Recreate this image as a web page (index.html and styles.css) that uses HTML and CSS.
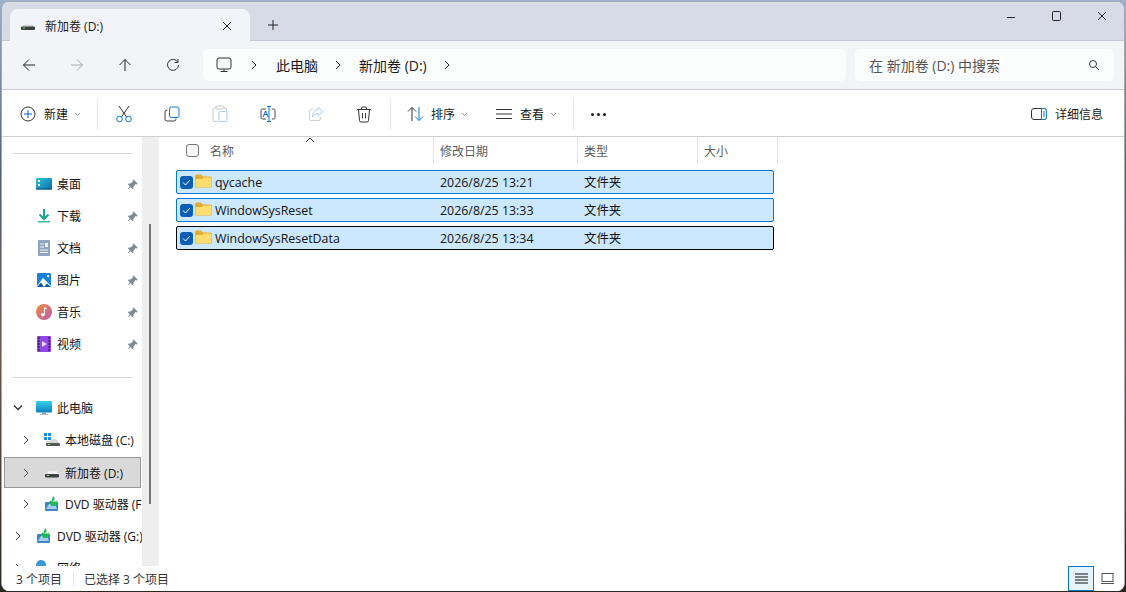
FILE: index.html
```html
<!DOCTYPE html>
<html lang="zh-CN">
    <head>
        <title>新加卷 (D:) - 文件资源管理器</title>
        <meta charset="UTF-8">
        <meta name="viewport" content="width=device-width, initial-scale=1">
        <link rel="stylesheet" href="styles.css">
    </head>

    <body>
        <div class="window">
            <!-- title bar -->
            <div class="titlebar">
                <div class="tab">
                    <svg class="tab-icon" width="16" height="16" viewBox="0 0 16 16"><path d="M2 9.5 3.5 6.5H12.5L14 9.5Z" fill="#d5d7da"/><rect x="1" y="8.5" width="14" height="3.5" rx="1" fill="#3c3f41"/><rect x="3" y="9.5" width="2" height="1" fill="#6fe05a"/></svg>
                    <span class="tab-title">新加卷 (D:)</span>
                    <svg class="tab-close" width="10" height="10" viewBox="0 0 10 10"><path d="M1 1 9 9M9 1 1 9" stroke="#222" fill="none"/></svg>
                </div>
                <svg class="tab-add" width="12" height="12" viewBox="0 0 12 12"><path d="M6 1V11M1 6H11" stroke="#222" fill="none"/></svg>
                <div class="win-controls">
                    <svg class="win-btn" width="10" height="10" viewBox="0 0 10 10"><path d="M1 6.5H9" stroke="#222" fill="none"/></svg>
                    <svg class="win-btn" width="10" height="10" viewBox="0 0 10 10"><rect x="1.5" y="0.5" width="8" height="9" rx="1" stroke="#222" fill="none"/></svg>
                    <svg class="win-btn" width="10" height="10" viewBox="0 0 10 10"><path d="M1 1 9 9M9 1 1 9" stroke="#222" fill="none"/></svg>
                </div>
            </div>

            <!-- back / forward / address -->
            <div class="navbar">
                <div class="nav-btns">
                    <svg class="nav-btn" width="14" height="14" viewBox="0 0 14 14"><path d="M13 7H1.5M7 1.5 1.5 7 7 12.5" stroke="#222" fill="none"/></svg>
                    <svg class="nav-btn" width="14" height="14" viewBox="0 0 14 14"><path d="M1 7H12.5M7 1.5 12.5 7 7 12.5" stroke="#a9abae" fill="none"/></svg>
                    <svg class="nav-btn" width="14" height="14" viewBox="0 0 14 14"><path d="M7 13V1.5M1.5 7 7 1.5 12.5 7" stroke="#222" fill="none"/></svg>
                    <svg class="nav-btn" width="14" height="14" viewBox="0 0 14 14"><path d="M11.8 4.2A5.5 5.5 0 1 0 12.5 7M12 1V4.5H8.5" stroke="#333" fill="none"/></svg>
                </div>
                <div class="address">
                    <svg class="pc-icon" width="16" height="16" viewBox="0 0 16 16"><rect x="1" y="1" width="14" height="11" rx="2" stroke="#333" fill="none"/><path d="M8 12V14.5M4.5 14.5H11.5" stroke="#333" fill="none"/></svg>
                    <svg class="crumb-sep" width="6" height="10" viewBox="0 0 6 10"><path d="M1 1 5 5 1 9" stroke="#222" fill="none"/></svg>
                    <span class="crumb">此电脑</span>
                    <svg class="crumb-sep" width="6" height="10" viewBox="0 0 6 10"><path d="M1 1 5 5 1 9" stroke="#222" fill="none"/></svg>
                    <span class="crumb">新加卷 (D:)</span>
                    <svg class="crumb-sep" width="6" height="10" viewBox="0 0 6 10"><path d="M1 1 5 5 1 9" stroke="#222" fill="none"/></svg>
                </div>
                <div class="search">
                    <span class="search-text">在 新加卷 (D:) 中搜索</span>
                    <svg width="12" height="12" viewBox="0 0 12 12"><circle cx="5" cy="5" r="3.5" stroke="#333" fill="none"/><path d="M7.5 7.5 11 11" stroke="#333" fill="none"/></svg>
                </div>
            </div>

            <!-- command bar -->
            <div class="toolbar">
                <div class="tool-new">
                    <svg width="16" height="16" viewBox="0 0 16 16"><circle cx="8" cy="8" r="7" stroke="#333" fill="none"/><path d="M8 4V12M4 8H12" stroke="#0a63b8" fill="none"/></svg>
                    <span class="tool-label">新建</span>
                    <svg class="caret" width="7" height="5" viewBox="0 0 7 5"><path d="M1 1 3.5 3.5 6 1" stroke="#999" fill="none"/></svg>
                </div>
                <div class="tool-sep"></div>
                <div class="tool-icons">
                    <div class="tool">
                        <svg width="16" height="18" viewBox="0 0 16 18"><path d="M3 1 10.5 12M13 1 5.5 12" stroke="#333" fill="none"/><circle cx="3.5" cy="14" r="2.8" stroke="#0a78d4" fill="none"/><circle cx="12.5" cy="14" r="2.8" stroke="#0a78d4" fill="none"/></svg>
                    </div>
                    <div class="tool">
                        <svg width="16" height="16" viewBox="0 0 16 16"><path d="M3.5 4H3A2 2 0 0 0 1 6V13A2 2 0 0 0 3 15H10A2 2 0 0 0 12 13V12.5" stroke="#444" fill="none"/><rect x="5.5" y="1" width="9.5" height="10.5" rx="2" stroke="#0a78d4" fill="none"/></svg>
                    </div>
                    <div class="tool">
                        <svg width="16" height="18" viewBox="0 0 16 18"><path d="M4 3H2.5A1.5 1.5 0 0 0 1 4.5V15A1.5 1.5 0 0 0 2.5 16.5H6M12 3H13.5A1 1 0 0 1 14.5 4.5V6" stroke="#c8c8c8" fill="none"/><rect x="4" y="1" width="8" height="3" rx="1" stroke="#c8c8c8" fill="none"/><rect x="7" y="6.5" width="8" height="10" rx="1.5" stroke="#a8cdec" fill="none"/></svg>
                    </div>
                    <div class="tool">
                        <svg width="16" height="16" viewBox="0 0 16 16"><path d="M6 3H2.5A1.5 1.5 0 0 0 1 4.5V11.5A1.5 1.5 0 0 0 2.5 13H6M12 3H13.5A1.5 1.5 0 0 1 15 4.5V11.5A1.5 1.5 0 0 1 13.5 13H12" stroke="#444" fill="none"/><path d="M9 0.5V15.5M7 0.5H11M7 15.5H11" stroke="#0a78d4" fill="none"/><text x="2.6" y="11" class="rename-a">A</text></svg>
                    </div>
                    <div class="tool">
                        <svg width="16" height="16" viewBox="0 0 16 16"><path d="M5 3.5H3A1.5 1.5 0 0 0 1.5 5V13A1.5 1.5 0 0 0 3 14.5H11A1.5 1.5 0 0 0 12.5 13V11" stroke="#d0d0d0" fill="none"/><path d="M10 1.5 15 5.5 10 9.5V7.5C7.5 7.5 5.5 8.5 4.5 11 4.5 7.5 6.5 4 10 3.7Z" stroke="#a8cdec" fill="none"/></svg>
                    </div>
                    <div class="tool">
                        <svg width="16" height="17" viewBox="0 0 16 17"><path d="M1 3.5H15M5.5 3.5V2A1 1 0 0 1 6.5 1H9.5A1 1 0 0 1 10.5 2V3.5M2.5 3.5 3.5 14.5A1.5 1.5 0 0 0 5 16H11A1.5 1.5 0 0 0 12.5 14.5L13.5 3.5M6.5 7V12.5M9.5 7V12.5" stroke="#333" fill="none"/></svg>
                    </div>
                </div>
                <div class="tool-sep"></div>
                <div class="tool-menu tool-sort">
                    <svg width="17" height="16" viewBox="0 0 17 16"><path d="M5 15V1.5M1 5.5 5 1.5 9 5.5" stroke="#333" fill="none"/><path d="M12 1V14.5M8 10.5 12 14.5 16 10.5" stroke="#0a78d4" fill="none"/></svg>
                    <span class="tool-label">排序</span>
                    <svg class="caret" width="7" height="5" viewBox="0 0 7 5"><path d="M1 1 3.5 3.5 6 1" stroke="#999" fill="none"/></svg>
                </div>
                <div class="tool-menu tool-view">
                    <svg width="16" height="12" viewBox="0 0 16 12"><path d="M0 1.5H16M0 6H16M0 10.5H16" stroke="#333" fill="none"/></svg>
                    <span class="tool-label">查看</span>
                    <svg class="caret" width="7" height="5" viewBox="0 0 7 5"><path d="M1 1 3.5 3.5 6 1" stroke="#999" fill="none"/></svg>
                </div>
                <div class="tool-sep"></div>
                <div class="tool-more">
                    <span class="dot"></span><span class="dot"></span><span class="dot"></span>
                </div>
                <div class="tool-details">
                    <svg width="16" height="12" viewBox="0 0 16 12"><rect x="0.5" y="0.5" width="15" height="11" rx="2.5" stroke="#333" fill="none"/><path d="M10.5 0.5H13A2.5 2.5 0 0 1 15.5 3V9A2.5 2.5 0 0 1 13 11.5H10.5Z" stroke="#0a78d4" fill="#fff"/><path d="M12 4H14M12 6H14M12 8H14" stroke="#0a78d4" fill="none"/></svg>
                    <span class="tool-label">详细信息</span>
                </div>
            </div>

            <div class="main">
                <!-- navigation pane -->
                <div class="sidebar">
                    <div class="side-sep side-sep-top"></div>

                    <div class="side-item side-pinned">
                        <svg class="side-icon" width="16" height="16" viewBox="0 0 16 16"><defs><linearGradient id="g-desk" x1="0" y1="0" x2="1" y2="1"><stop offset="0" stop-color="#2fc4dc"/><stop offset="1" stop-color="#0a6fa8"/></linearGradient></defs><rect x="0" y="2" width="16" height="11.5" rx="1" fill="url(#g-desk)"/><rect x="2" y="4" width="2" height="2" fill="#e8f8fc"/><rect x="2" y="8" width="2" height="2" fill="#e8f8fc"/><rect x="0" y="12.5" width="16" height="1" fill="#0c4f78"/></svg>
                        <span class="side-text">桌面</span>
                        <svg class="pin" width="11" height="11" viewBox="0 0 11 11"><path d="M6.5 0.5 10.5 4.5 9.5 5.5 8.5 5 6.5 7.5V9.5L5.5 10 1 5.5 1.5 4.5H3.5L6 2.5 5.5 1.5Z M2.5 7.5 0.5 10.5 3.5 8.5Z" fill="#7d8790"/></svg>
                    </div>
                    <div class="side-item side-pinned">
                        <svg class="side-icon" width="16" height="16" viewBox="0 0 16 16"><path d="M8 1V10M3.5 6.5 8 11 12.5 6.5" stroke="#16a88c" stroke-width="2" fill="none"/><rect x="2" y="13" width="12" height="1.5" fill="#2bc4a8"/></svg>
                        <span class="side-text">下载</span>
                        <svg class="pin" width="11" height="11" viewBox="0 0 11 11"><path d="M6.5 0.5 10.5 4.5 9.5 5.5 8.5 5 6.5 7.5V9.5L5.5 10 1 5.5 1.5 4.5H3.5L6 2.5 5.5 1.5Z M2.5 7.5 0.5 10.5 3.5 8.5Z" fill="#7d8790"/></svg>
                    </div>
                    <div class="side-item side-pinned">
                        <svg class="side-icon" width="16" height="16" viewBox="0 0 16 16"><rect x="2" y="0" width="12" height="16" rx="1" fill="#8ea4c0"/><path d="M4 4H8M4 7H8M4 10H12M4 12.5H12" stroke="#eef2f7" fill="none"/><rect x="9" y="3" width="3" height="4" fill="#eef2f7"/></svg>
                        <span class="side-text">文档</span>
                        <svg class="pin" width="11" height="11" viewBox="0 0 11 11"><path d="M6.5 0.5 10.5 4.5 9.5 5.5 8.5 5 6.5 7.5V9.5L5.5 10 1 5.5 1.5 4.5H3.5L6 2.5 5.5 1.5Z M2.5 7.5 0.5 10.5 3.5 8.5Z" fill="#7d8790"/></svg>
                    </div>
                    <div class="side-item side-pinned">
                        <svg class="side-icon" width="16" height="16" viewBox="0 0 16 16"><rect x="1" y="1" width="14" height="14" rx="1" fill="#1a82d8"/><path d="M1 14 7 6 15 14V15H1Z" fill="#fff"/><path d="M1 15 5 10.5 8 15Z" fill="#0b5cad"/><path d="M8 15 11 11.5 15 15Z" fill="#0b5cad"/><rect x="11" y="3" width="2" height="2" fill="#fff"/></svg>
                        <span class="side-text">图片</span>
                        <svg class="pin" width="11" height="11" viewBox="0 0 11 11"><path d="M6.5 0.5 10.5 4.5 9.5 5.5 8.5 5 6.5 7.5V9.5L5.5 10 1 5.5 1.5 4.5H3.5L6 2.5 5.5 1.5Z M2.5 7.5 0.5 10.5 3.5 8.5Z" fill="#7d8790"/></svg>
                    </div>
                    <div class="side-item side-pinned">
                        <svg class="side-icon" width="16" height="16" viewBox="0 0 16 16"><defs><linearGradient id="g-music" x1="0" y1="0" x2="1" y2="1"><stop offset="0" stop-color="#f08a3c"/><stop offset="1" stop-color="#b85cb0"/></linearGradient></defs><circle cx="8" cy="8" r="8" fill="url(#g-music)"/><path d="M8.5 3.5V10.5" stroke="#fff" stroke-width="1.2" fill="none"/><path d="M8.5 3.5 11 5" stroke="#fff" fill="none"/><circle cx="6.8" cy="10.8" r="1.8" fill="#fff"/></svg>
                        <span class="side-text">音乐</span>
                        <svg class="pin" width="11" height="11" viewBox="0 0 11 11"><path d="M6.5 0.5 10.5 4.5 9.5 5.5 8.5 5 6.5 7.5V9.5L5.5 10 1 5.5 1.5 4.5H3.5L6 2.5 5.5 1.5Z M2.5 7.5 0.5 10.5 3.5 8.5Z" fill="#7d8790"/></svg>
                    </div>
                    <div class="side-item side-pinned">
                        <svg class="side-icon" width="16" height="16" viewBox="0 0 16 16"><rect x="1" y="0" width="14" height="16" rx="1" fill="#8f47e0"/><path d="M2 2H3.5M2 5H3.5M2 8H3.5M2 11H3.5M2 14H3.5M12.5 2H14M12.5 5H14M12.5 8H14M12.5 11H14M12.5 14H14" stroke="#1d1140" stroke-width="1.4" fill="none"/><path d="M6 5 11 8 6 11Z" fill="#e4d4fb"/></svg>
                        <span class="side-text">视频</span>
                        <svg class="pin" width="11" height="11" viewBox="0 0 11 11"><path d="M6.5 0.5 10.5 4.5 9.5 5.5 8.5 5 6.5 7.5V9.5L5.5 10 1 5.5 1.5 4.5H3.5L6 2.5 5.5 1.5Z M2.5 7.5 0.5 10.5 3.5 8.5Z" fill="#7d8790"/></svg>
                    </div>

                    <div class="side-sep"></div>

                    <div class="side-item side-top">
                        <svg class="chev" width="16" height="8" viewBox="0 0 16 8"><path d="M4 1.5 8 5.5 12 1.5" stroke="#333" stroke-width="1.3" fill="none"/></svg>
                        <svg class="side-icon" width="16" height="16" viewBox="0 0 16 16"><defs><linearGradient id="g-pc" x1="0" y1="0" x2="0" y2="1"><stop offset="0" stop-color="#38d0e8"/><stop offset="1" stop-color="#0a80c0"/></linearGradient></defs><rect x="0" y="1" width="16" height="11.5" rx="1" fill="url(#g-pc)"/><rect x="6" y="12.5" width="4" height="2" fill="#8aa0ac"/><rect x="4" y="14" width="8" height="1" fill="#a8b6be"/></svg>
                        <span class="side-text">此电脑</span>
                    </div>
                    <div class="side-item side-child">
                        <svg class="chev" width="16" height="10" viewBox="0 0 16 10"><path d="M6 1 10 5 6 9" stroke="#444" fill="none"/></svg>
                        <svg class="side-icon" width="16" height="16" viewBox="0 0 16 16"><path d="M0 1H3V4H0ZM4 1H7V4H4ZM0 5H3V8H0ZM4 5H7V8H4Z" fill="#1a8ae0"/><path d="M3 9 6 9 8 7H12.5L15 11H2Z" fill="#d5d7da"/><rect x="2" y="11" width="14" height="3" rx="1" fill="#55585b"/><rect x="4" y="12" width="2" height="1" fill="#6fe05a"/></svg>
                        <span class="side-text">本地磁盘 (C:)</span>
                    </div>
                    <div class="side-item side-child side-current">
                        <svg class="chev" width="16" height="10" viewBox="0 0 16 10"><path d="M6 1 10 5 6 9" stroke="#555" fill="none"/></svg>
                        <svg class="side-icon" width="16" height="16" viewBox="0 0 16 16"><path d="M3 9 4.5 6H12.5L15 9.5Z" fill="#f0f0f0"/><rect x="1" y="9" width="14" height="3.5" rx="1" fill="#3f4244"/><rect x="3" y="10" width="2" height="1" fill="#6fe05a"/></svg>
                        <span class="side-text">新加卷 (D:)</span>
                    </div>
                    <div class="side-item side-child">
                        <svg class="chev" width="16" height="10" viewBox="0 0 16 10"><path d="M6 1 10 5 6 9" stroke="#444" fill="none"/></svg>
                        <svg class="side-icon" width="16" height="16" viewBox="0 0 16 16"><use href="#dvd-shape"/></svg>
                        <span class="side-text">DVD 驱动器 (F:)</span>
                    </div>
                    <div class="side-item side-top">
                        <svg class="chev" width="16" height="10" viewBox="0 0 16 10"><path d="M6 1 10 5 6 9" stroke="#444" fill="none"/></svg>
                        <svg class="side-icon" width="16" height="16" viewBox="0 0 16 16"><g id="dvd-shape"><rect x="1" y="6" width="13" height="9" rx="1" fill="#3c86c8"/><path d="M2 13 5 8H11L13 13Z" fill="#a9cdea"/><path d="M9 0 11 3 8.5 5.5H12V4.5L14 7 11 10 7.5 10 4.5 6.5 6.5 4.5 7.5 5.5Z" fill="#22b85a"/></g></svg>
                        <span class="side-text">DVD 驱动器 (G:)</span>
                    </div>
                    <div class="side-item side-top">
                        <svg class="chev" width="16" height="10" viewBox="0 0 16 10"><path d="M6 1 10 5 6 9" stroke="#444" fill="none"/></svg>
                        <svg class="side-icon" width="16" height="16" viewBox="0 0 16 16"><circle cx="5" cy="5" r="5" fill="#3a9ad8"/><rect x="3" y="6" width="13" height="9" rx="1" fill="#2a7fb8"/></svg>
                        <span class="side-text">网络</span>
                    </div>
                </div>

                <div class="scrollbar">
                    <div class="scroll-thumb"></div>
                </div>

                <!-- file list -->
                <div class="content">
                    <svg class="sort-mark" width="10" height="6" viewBox="0 0 10 6"><path d="M1 5 5 1 9 5" stroke="#333" fill="none"/></svg>
                    <div class="list-head">
                        <div class="col col-name">
                            <span class="head-check"></span>
                            <span>名称</span>
                        </div>
                        <div class="col col-date">修改日期</div>
                        <div class="col col-type">类型</div>
                        <div class="col col-size">大小</div>
                    </div>

                    <div class="file-row">
                        <div class="file-name">
                            <span class="file-check"><svg width="9" height="7" viewBox="0 0 9 7"><path d="M1 3.5 3.5 6 8 1" stroke="#fff" fill="none"/></svg></span>
                            <svg class="folder" width="17" height="14" viewBox="0 0 17 14"><path d="M0 2A1.5 1.5 0 0 1 1.5 0.5H6L8 2.5H15.5A1.5 1.5 0 0 1 17 4V12A1.5 1.5 0 0 1 15.5 13.5H1.5A1.5 1.5 0 0 1 0 12Z" fill="#e9ab2c"/><path d="M0.5 5 7 5 8.5 3.5H15.5A1 1 0 0 1 16.5 4.5V12A1 1 0 0 1 15.5 13H1.5A1 1 0 0 1 0.5 12Z" fill="#ffdc6e"/></svg>
                            <span>qycache</span>
                        </div>
                        <div class="file-date">2026/8/25 13:21</div>
                        <div class="file-type">文件夹</div>
                    </div>
                    <div class="file-row">
                        <div class="file-name">
                            <span class="file-check"><svg width="9" height="7" viewBox="0 0 9 7"><path d="M1 3.5 3.5 6 8 1" stroke="#fff" fill="none"/></svg></span>
                            <svg class="folder" width="17" height="14" viewBox="0 0 17 14"><path d="M0 2A1.5 1.5 0 0 1 1.5 0.5H6L8 2.5H15.5A1.5 1.5 0 0 1 17 4V12A1.5 1.5 0 0 1 15.5 13.5H1.5A1.5 1.5 0 0 1 0 12Z" fill="#e9ab2c"/><path d="M0.5 5 7 5 8.5 3.5H15.5A1 1 0 0 1 16.5 4.5V12A1 1 0 0 1 15.5 13H1.5A1 1 0 0 1 0.5 12Z" fill="#ffdc6e"/></svg>
                            <span>WindowSysReset</span>
                        </div>
                        <div class="file-date">2026/8/25 13:33</div>
                        <div class="file-type">文件夹</div>
                    </div>
                    <div class="file-row file-focus">
                        <div class="file-name">
                            <span class="file-check"><svg width="9" height="7" viewBox="0 0 9 7"><path d="M1 3.5 3.5 6 8 1" stroke="#fff" fill="none"/></svg></span>
                            <svg class="folder" width="17" height="14" viewBox="0 0 17 14"><path d="M0 2A1.5 1.5 0 0 1 1.5 0.5H6L8 2.5H15.5A1.5 1.5 0 0 1 17 4V12A1.5 1.5 0 0 1 15.5 13.5H1.5A1.5 1.5 0 0 1 0 12Z" fill="#e9ab2c"/><path d="M0.5 5 7 5 8.5 3.5H15.5A1 1 0 0 1 16.5 4.5V12A1 1 0 0 1 15.5 13H1.5A1 1 0 0 1 0.5 12Z" fill="#ffdc6e"/></svg>
                            <span>WindowSysResetData</span>
                        </div>
                        <div class="file-date">2026/8/25 13:34</div>
                        <div class="file-type">文件夹</div>
                    </div>
                </div>
            </div>

            <!-- status bar -->
            <div class="statusbar">
                <span class="status-count">3 个项目</span>
                <span class="status-sep"></span>
                <span>已选择 3 个项目</span>
                <div class="view-btns">
                    <div class="view-btn view-active">
                        <svg width="13" height="11" viewBox="0 0 13 11"><path d="M0 1H13M0 4H13M0 7H13M0 10H13" stroke="#111" fill="none"/></svg>
                    </div>
                    <div class="view-btn">
                        <svg width="13" height="11" viewBox="0 0 13 11"><rect x="1" y="0.5" width="11" height="8" stroke="#555" fill="none"/><path d="M0 10.5H13" stroke="#555" fill="none"/></svg>
                    </div>
                </div>
            </div>
        </div>
    </body>
</html>
```

FILE: styles.css
```css
* {
    box-sizing: border-box;
}
html, body {
    margin: 0;
    height: 100%;
    overflow: hidden;
}
body {
    background: linear-gradient(180deg, #9db0cc 0%, #4d5d72 30%, #6e5a4c 60%, #2a2620 100%);
    font-family: "Open Sans", "Noto Sans CJK SC", sans-serif;
    font-size: 12px;
    color: #111;
}
svg {
    display: block;
    flex: none;
}

.window {
    display: flex;
    flex-direction: column;
    height: 590px;
    margin: 1px 1px 0 1px;
    background-color: #fff;
    border: 1px solid #a4a9b4;
    border-bottom: 0;
    border-radius: 8px;
    overflow: hidden;
}

/* title bar */
.titlebar {
    display: flex;
    align-items: flex-end;
    height: 39px;
    padding-left: 8px;
    background-color: #d7dbe6;
    box-shadow: inset 0 -1px 0 #c6cad6;
}
.tab {
    display: flex;
    align-items: center;
    width: 240px;
    height: 32px;
    padding: 1px 18px 0 10px;
    background-color: #f3f4f9;
    border-radius: 8px 8px 0 0;
}
.tab-title {
    margin-left: 9px;
    flex: 1;
    font-size: 12px;
    color: #1a1a1a;
}
.tab-add {
    margin: 0 0 10px 17px;
}
.win-controls {
    display: flex;
    gap: 35px;
    margin-left: auto;
    margin-right: 17px;
    margin-bottom: 20px;
}
.win-controls .win-btn:last-child {
    margin-left: 1px;
}

/* nav row */
.navbar {
    display: flex;
    align-items: center;
    height: 49px;
    background-color: #f3f4f8;
    border-bottom: 1px solid #c9cbd0;
}
.nav-btns {
    display: flex;
    width: 201px;
    padding-left: 20px;
    gap: 34px;
}
.address {
    display: flex;
    align-items: center;
    width: 643px;
    height: 32px;
    padding-left: 13px;
    background-color: #fbfcfc;
    border-radius: 5px;
    font-size: 14px;
}
.pc-icon {
    margin-right: 19px;
}
.pc-icon + .crumb-sep {
    margin-right: 1px;
}
.crumb {
    margin: 0 17px 0 18px;
    color: #1a1a1a;
}
.search {
    display: flex;
    align-items: center;
    justify-content: space-between;
    width: 259px;
    height: 32px;
    margin-left: 9px;
    padding: 0 14px;
    background-color: #fbfcfc;
    border-radius: 5px;
    font-size: 14px;
    color: #555;
}

/* command bar */
.toolbar {
    display: flex;
    align-items: center;
    height: 47px;
    padding: 2px 0 0 18px;
    background-color: #fff;
    border-bottom: 1px solid #cfcfd2;
}
.tool-new {
    display: flex;
    align-items: center;
    width: 77px;
}
.tool-label {
    margin-left: 8px;
    color: #1a1a1a;
}
.caret {
    margin-left: 6px;
}
.tool-sep {
    width: 1px;
    height: 32px;
    background-color: #e9e9e9;
}
.tool-icons {
    display: flex;
    padding: 0 2px;
}
.tool {
    display: flex;
    justify-content: center;
    align-items: center;
    width: 48px;
    height: 32px;
}
.rename-a {
    font-family: "Open Sans", sans-serif;
    font-size: 9px;
    fill: #0a63b8;
    font-weight: 600;
}
.tool-menu {
    display: flex;
    align-items: center;
}
.tool-sort {
    padding-left: 16px;
}
.tool-sort .tool-label {
    margin-left: 7px;
}
.tool-view {
    margin-left: 28px;
    width: 77px;
}
.tool-more {
    display: flex;
    gap: 3px;
    padding-left: 17px;
}
.dot {
    width: 3px;
    height: 3px;
    background-color: #222;
    border-radius: 50%;
}
.tool-details {
    display: flex;
    align-items: center;
    margin-left: auto;
    padding-right: 21px;
}

/* main area */
.main {
    display: flex;
    flex: 1;
    min-height: 0;
}
.sidebar {
    width: 140px;
    padding-top: 16px;
    overflow: hidden;
    flex: none;
}
.side-sep {
    height: 1px;
    margin: 17px 9px 14px 10px;
    background-color: #d9d9d9;
}
.side-sep-top {
    margin-top: 0;
}
.side-item {
    display: flex;
    align-items: center;
    height: 32px;
    white-space: nowrap;
    overflow: hidden;
}
.side-pinned {
    padding: 0 4px 0 34px;
}
.side-top {
    padding-left: 8px;
}
.side-child {
    padding-left: 16px;
}
.side-top .chev {
    margin-right: 10px;
}
.side-child .chev {
    margin-right: 10px;
}
.side-text {
    margin-left: 5px;
    color: #111;
}
.pin {
    margin-left: auto;
}
.side-current {
    height: 31px;
    margin: 1px 1px 0 2px;
    padding-left: 13px;
    background-color: #d9d9d9;
    border: 1px solid #999;
}
.scrollbar {
    width: 16px;
    flex: none;
    padding-top: 87px;
    padding-left: 7px;
    background-color: #eeeeee;
}
.scroll-thumb {
    width: 2px;
    height: 280px;
    background-color: #777;
}

/* file list */
.content {
    position: relative;
    flex: 1;
    padding-left: 17px;
    border-left: 1px solid #f3f3f3;
    background-color: #fff;
}
.sort-mark {
    position: absolute;
    top: 0;
    left: 146px;
}
.list-head {
    display: flex;
    height: 27px;
    margin-bottom: 6px;
    color: #5c5c5c;
}
.col {
    display: flex;
    align-items: center;
    padding-left: 6px;
    border-right: 1px solid #e5e5e5;
}
.col-name {
    width: 258px;
    padding-left: 10px;
    gap: 11px;
}
.col-date {
    width: 144px;
}
.col-type {
    width: 120px;
}
.col-size {
    width: 80px;
}
.head-check {
    width: 13px;
    height: 13px;
    background-color: #f8f8f8;
    border: 1px solid #777;
    border-radius: 3px;
}
.file-row {
    display: flex;
    align-items: center;
    width: 598px;
    height: 24px;
    margin-bottom: 4px;
    font-size: 12.4px;
    background-color: #cce8ff;
    border: 1px solid #0078d4;
    border-radius: 2px;
}
.file-focus {
    border-color: #000;
}
.file-name {
    display: flex;
    align-items: center;
    width: 263px;
    padding-left: 3px;
}
.file-check {
    display: flex;
    align-items: center;
    justify-content: center;
    width: 13px;
    height: 13px;
    background-color: #0a5fb4;
    border-radius: 3px;
}
.folder {
    margin: -2px 3px 0 2px;
}
.file-date {
    width: 144px;
}

/* status bar */
.statusbar {
    display: flex;
    align-items: center;
    height: 25px;
    padding-left: 14px;
    background-color: #fff;
    color: #333;
}
.status-count {
    width: 57px;
}
.status-sep {
    width: 1px;
    height: 14px;
    margin-right: 10px;
    background-color: #e6e6e6;
}
.view-btns {
    display: flex;
    align-items: center;
    margin-left: auto;
    margin-right: 4px;
    height: 100%;
}
.view-btn {
    display: flex;
    align-items: center;
    justify-content: center;
    width: 26px;
    height: 25px;
}
.view-active {
    background-color: #e5f3fb;
    border: 1px solid #0a78c8;
}
```
